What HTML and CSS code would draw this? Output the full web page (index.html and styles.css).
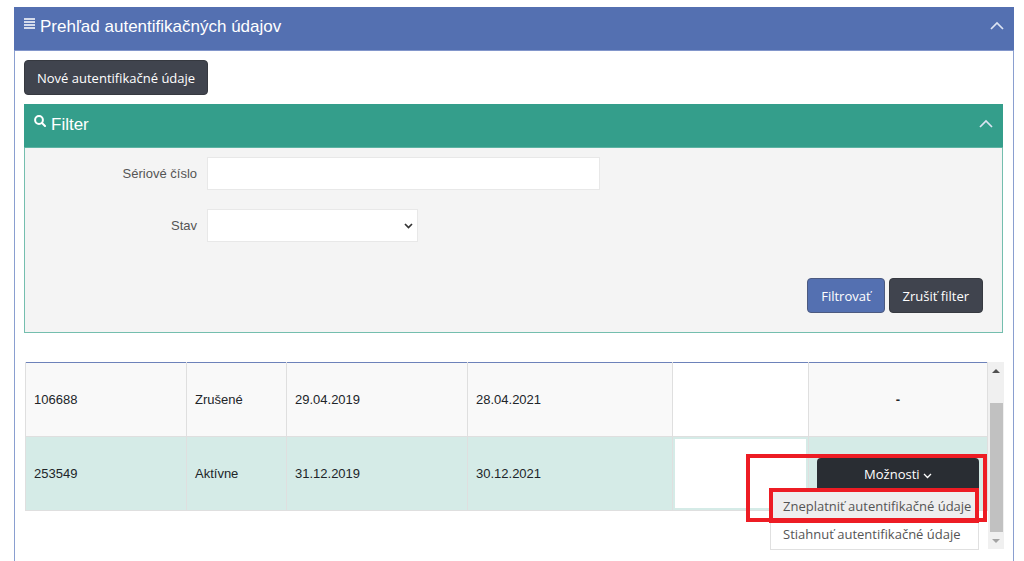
FILE: index.html
```html
<!DOCTYPE html>
<html lang="sk">
<head>
<meta charset="utf-8">
<title>Prehľad autentifikačných údajov</title>
<link rel="stylesheet" href="styles.css">
</head>
<body>
<main class="panel">
  <header class="panel-head">
    <svg class="icon-list" viewBox="0 0 11 11" width="11" height="11" aria-hidden="true"><path d="M0 1h11M0 4h11M0 7h11M0 10h11" stroke="currentColor" stroke-width="1.4"/></svg>
    <h1 class="panel-title">Prehľad autentifikačných údajov</h1>
    <button class="collapse" type="button" aria-label="Zbaliť prehľad"><svg viewBox="0 0 14 9" width="14" height="9"><path d="M1 8l6-6 6 6" fill="none" stroke="currentColor" stroke-width="1.7"/></svg></button>
  </header>
  <div class="panel-body">
    <button class="btn" type="button">Nové autentifikačné údaje</button>
    <section class="filter">
      <header class="panel-head filter-head">
        <svg class="icon-search" viewBox="0 0 12 12" width="12" height="12" aria-hidden="true"><circle cx="5" cy="5" r="3.9" fill="none" stroke="currentColor" stroke-width="2"/><path d="M8 8l3 3" stroke="currentColor" stroke-width="2" stroke-linecap="round"/></svg>
        <h2 class="panel-title">Filter</h2>
        <button class="collapse" type="button" aria-label="Zbaliť filter"><svg viewBox="0 0 14 9" width="14" height="9"><path d="M1 8l6-6 6 6" fill="none" stroke="currentColor" stroke-width="1.7"/></svg></button>
      </header>
      <form class="filter-form">
        <div class="field">
          <label class="field-label" for="serial">Sériové číslo</label>
          <input class="control control-text" id="serial" type="text">
        </div>
        <div class="field">
          <label class="field-label" for="state">Stav</label>
          <div class="select-wrap">
            <select class="control control-select" id="state"><option></option></select>
            <svg class="select-arrow" viewBox="0 0 9 6" width="9" height="6" aria-hidden="true"><path d="M1 1l3.5 3.5L8 1" fill="none" stroke="currentColor" stroke-width="1.7"/></svg>
          </div>
        </div>
        <div class="actions">
          <button class="btn btn-primary" type="button">Filtrovať</button>
          <button class="btn" type="button">Zrušiť filter</button>
        </div>
      </form>
    </section>
    <div class="list">
      <div class="list-view">
        <table class="grid">
          <colgroup><col class="col-id"><col class="col-state"><col class="col-from"><col class="col-to"><col class="col-blank"><col class="col-menu"></colgroup>
          <tbody>
            <tr>
              <td>106688</td><td>Zrušené</td><td>29.04.2019</td><td>28.04.2021</td><td class="blank"></td><td class="options none">-</td>
            </tr>
            <tr class="active">
              <td>253549</td><td>Aktívne</td><td>31.12.2019</td><td>30.12.2021</td><td class="blank"></td>
              <td class="options">
                <div class="dropdown">
                  <button class="dropdown-toggle" type="button" aria-expanded="true">Možnosti <svg viewBox="0 0 9 6" width="9" height="6" aria-hidden="true"><path d="M1 1l3.5 3.5L8 1" fill="none" stroke="currentColor" stroke-width="1.3"/></svg></button>
                  <ul class="menu">
                    <li class="menu-row marked"><a class="menu-link" href="#">Zneplatniť autentifikačné údaje</a></li>
                    <li class="menu-row"><a class="menu-link" href="#">Stiahnuť autentifikačné údaje</a></li>
                  </ul>
                  <div class="marker"></div>
                </div>
              </td>
            </tr>
          </tbody>
        </table>
      </div>
      <div class="scrollbar" aria-hidden="true">
        <svg class="scroll-arrow" viewBox="0 0 16 17" width="16" height="17"><path d="M4 11L8 7l4 4z" fill="#505050"/></svg>
        <div class="track"><div class="thumb"></div></div>
        <svg class="scroll-arrow" viewBox="0 0 16 17" width="16" height="17"><path d="M4 7L8 11l4-4z" fill="#a3a3a3"/></svg>
      </div>
    </div>
  </div>
</main>
</body>
</html>
```
FILE: styles.css
```css
* { box-sizing: border-box; }
body {
  margin: 0;
  padding: 7px 10px 0 14px;
  min-height: 100vh;
  display: flex;
  background: #fff;
  color: #212529;
  font: 13px/20px "Liberation Sans", Arial, sans-serif;
}
.panel {
  flex: 1;
  min-width: 0;
  border: solid #8a9fd0;
  border-width: 0 1px;
}
.panel-head {
  display: flex;
  align-items: flex-start;
  gap: 5px;
  height: 44px;
  margin: 0 -1px;
  padding: 10px 10px 0;
  border-bottom: 1px solid #8296cb;
  background: #5470b1;
  color: #fff;
}
.panel-title { margin: 0; font-size: 17px; line-height: 20px; font-weight: 400; }
.icon-list { margin-top: 1px; }
.collapse {
  display: flex;
  margin: 4px 0 0 auto;
  padding: 0;
  border: 0;
  background: none;
  color: #dde4f3;
}
.panel-body { padding: 9px 10px 10px 9px; }
.btn {
  height: 35px;
  padding: 0 12px;
  border: 1px solid #363940;
  border-radius: 4px;
  background: #40444e;
  color: #fff;
  font: 13px/20px "Open Sans", "Noto Sans", sans-serif;
}
.btn-primary { background: #5470b1; border-color: #4c5a80; }
.actions .btn { padding: 0 13px; }
.filter {
  margin: 9px 0 29px;
  border: 1px solid #74beae;
  border-top: 0;
  background: #f4f4f4;
}
.filter-head { padding-top: 11px; background: #349e8b; border-color: #5db3a3; }
.filter-form { padding: 9px 19px 19px 0; }
.field { display: flex; align-items: center; margin-bottom: 19px; }
.field-label {
  width: 182px;
  padding-right: 10px;
  text-align: right;
  color: #555;
}
.control {
  display: block;
  height: 33px;
  padding: 0 8px;
  border: 1px solid #e8e8e8;
  border-radius: 0;
  background: #fff;
  color: #333;
  font: inherit;
}
.control-text { width: 41%; }
.select-wrap { position: relative; width: 22%; }
.control-select { width: 100%; appearance: none; }
.select-arrow { position: absolute; right: 5px; top: 14px; color: #333; pointer-events: none; }
.actions { display: flex; justify-content: flex-end; gap: 4px; margin-top: 36px; }
.list { display: flex; margin: 0 -1px 0 1px; height: 187px; }
.list-view { flex: 1; min-width: 0; }
.grid {
  width: 100%;
  table-layout: fixed;
  border-collapse: collapse;
  border-top: 1px solid #6d82ba;
}
.grid td {
  height: 74px;
  padding: 0 8px;
  border: 1px solid #dfdfdf;
  border-top-width: 0;
  background: #f9f9f9;
}
.grid tr.active td { background: #d5ebe7; }
.grid td.blank, .grid tr.active td.blank { background: #fff; }
.grid tr.active td.blank { box-shadow: inset 0 0 0 2px #d5ebe7; }
.grid .none { text-align: center; font-weight: 700; }
.col-id { width: 161px; }
.col-state { width: 100px; }
.col-from { width: 181px; }
.col-blank { width: 136px; }
.col-menu { width: 179px; }
.dropdown { position: relative; }
.dropdown-toggle {
  display: block;
  width: 100%;
  height: 32px;
  padding: 0;
  border: 0;
  border-radius: 4px 4px 0 0;
  background: #292d33;
  color: #fff;
  font: 13px/20px "Open Sans", "Noto Sans", sans-serif;
}
.menu {
  position: absolute;
  top: 100%;
  right: 0;
  margin: 0;
  padding: 1px 0;
  width: 209px;
  border: 1px solid #e0e0e0;
  background: #fff;
  list-style: none;
}
.menu-row { position: relative; }
.marked { background: #eee; }
.marked::after {
  content: "";
  position: absolute;
  inset: -4px -1px -3px -2px;
  border: 4px solid #ed1c24;
  pointer-events: none;
}
.menu-link {
  display: block;
  padding: 4px 0 4px 12px;
  color: #555;
  font: 13px/20px "Open Sans", "Noto Sans", sans-serif;
  text-decoration: none;
  white-space: nowrap;
}
.marker {
  position: absolute;
  inset: -4px -8px -32px -71px;
  border: 4px solid #ed1c24;
  pointer-events: none;
}
.scrollbar { display: flex; flex-direction: column; width: 16px; background: #f0f0f0; }
.track { flex: 1; display: flex; align-items: flex-end; padding: 0 1px 0 2px; }
.thumb { width: 100%; height: 84%; background: #c1c1c1; }
```
